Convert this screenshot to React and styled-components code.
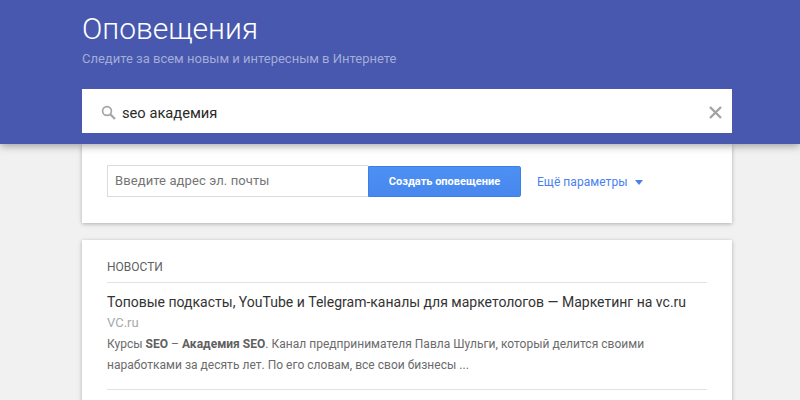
import React from "react";
import styled, { createGlobalStyle } from "styled-components";

const Global = createGlobalStyle`
  html, body { margin: 0; padding: 0; height: 400px; overflow: hidden; background: #f1f1f1; }
  body { font-family: Roboto, "Liberation Sans", sans-serif; }
`;
const Page = styled.div`
  width: 800px;
  height: 400px;
  overflow: hidden;
`;
const Header = styled.header`
  position: relative;
  z-index: 2;
  height: 144px;
  box-sizing: border-box;
  padding: 11px 68px 0 82px;
  background: #4758ae;
  box-shadow: 0 2px 8px rgba(0, 0, 0, 0.35);
`;
const Title = styled.h1`
  margin: 0;
  font-size: 30px;
  line-height: 36px;
  font-weight: 300;
  color: #fff;
`;
const Subtitle = styled.p`
  margin: 4px 0 0;
  font-size: 13px;
  line-height: 16px;
  color: #a4acd8;
`;
const SearchBar = styled.div`
  display: flex;
  align-items: center;
  height: 44px;
  box-sizing: border-box;
  margin-top: 22px;
  padding: 3px 10px 0 19px;
  background: #fff;
`;
const SearchText = styled.span`
  flex: 1;
  margin-left: 6px;
  font-size: 14.7px;
  color: #2a2a2a;
`;
const Main = styled.main`
  display: flex;
  flex-direction: column;
  gap: 17px;
  width: 650px;
  margin-left: 82px;
`;
const Card = styled.section`
  background: #fff;
  box-shadow: 0 1px 4px rgba(0, 0, 0, 0.28);
  padding: ${(p) => p.$pad};
`;
const FormRow = styled.div`
  display: flex;
  align-items: flex-end;
`;
const EmailInput = styled.div`
  width: 261px;
  height: 32px;
  box-sizing: border-box;
  padding-left: 7px;
  border: 1px solid #dcdcdc;
  border-right: 0;
  font-size: 13px;
  line-height: 30px;
  letter-spacing: 0.1px;
  color: #757575;
`;
const CreateButton = styled.div`
  width: 153px;
  height: 31px;
  box-sizing: border-box;
  border: 1px solid #3b7fe8;
  border-radius: 0 2px 2px 0;
  background: linear-gradient(#4d90f3, #4787ee);
  color: #fff;
  font-size: 11px;
  font-weight: 700;
  line-height: 29px;
  text-align: center;
`;
const MoreLink = styled.div`
  display: flex;
  align-items: center;
  gap: 7px;
  height: 30px;
  margin-left: 16px;
  font-size: 12px;
  letter-spacing: 0.05px;
  color: #4a7ff0;
`;
const Caret = styled.span`
  width: 0;
  height: 0;
  border-left: 4.5px solid transparent;
  border-right: 4.5px solid transparent;
  border-top: 5px solid #4a7ff0;
`;
const SectionLabel = styled.div`
  padding-bottom: 7px;
  border-bottom: 1px solid #e2e2e2;
  font-size: 12px;
  line-height: 16px;
  color: #5f5f5f;
`;
const Result = styled.article`
  padding: 8px 0 13px;
  border-bottom: 1px solid #e2e2e2;
`;
const ResultTitle = styled.div`
  font-size: 14px;
  line-height: 23px;
  color: #333;
`;
const Source = styled.div`
  font-size: 13px;
  line-height: 18px;
  color: #a8a8a8;
`;
const Snippet = styled.div`
  margin-top: 2px;
  font-size: 12px;
  line-height: 21px;
  letter-spacing: 0.02px;
  color: #6b6b6b;
  b { font-weight: 700; color: #5f5f5f; }
`;

export default function App() {
  return (
    <Page>
      <Global />
      <Header>
        <Title>Оповещения</Title>
        <Subtitle>Следите за всем новым и интересным в Интернете</Subtitle>
        <SearchBar>
          <svg width="15" height="15" viewBox="0 0 15 15" fill="none">
            <circle cx="6" cy="6" r="4.4" stroke="#a6a6a6" strokeWidth="1.7" />
            <path d="M9.4 9.4 14 14" stroke="#a6a6a6" strokeWidth="2.2" />
          </svg>
          <SearchText>seo академия</SearchText>
          <svg width="13" height="13" viewBox="0 0 13 13" fill="none">
            <path d="M1 1 12 12M12 1 1 12" stroke="#a3a3a3" strokeWidth="2.4" />
          </svg>
        </SearchBar>
      </Header>
      <Main>
        <Card $pad="21px 25px 26px">
          <FormRow>
            <EmailInput>Введите адрес эл. почты</EmailInput>
            <CreateButton>Создать оповещение</CreateButton>
            <MoreLink>
              Ещё параметры
              <Caret />
            </MoreLink>
          </FormRow>
        </Card>
        <Card $pad="19px 25px 40px">
          <SectionLabel>НОВОСТИ</SectionLabel>
          <Result>
            <ResultTitle>Топовые подкасты, YouTube и Telegram-каналы для маркетологов — Маркетинг на vc.ru</ResultTitle>
            <Source>VC.ru</Source>
            <Snippet>
              Курсы <b>SEO</b> – <b>Академия SEO</b>. Канал предпринимателя Павла Шульги, который делится своими
              <br />
              наработками за десять лет. По его словам, все свои бизнесы ...
            </Snippet>
          </Result>
        </Card>
      </Main>
    </Page>
  );
}
